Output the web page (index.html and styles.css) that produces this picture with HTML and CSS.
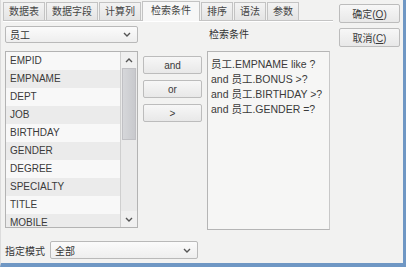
FILE: index.html
```html
<!DOCTYPE html>
<html lang="zh-CN">
<head>
    <meta charset="UTF-8">
    <title>检索条件</title>
    <link rel="stylesheet" href="styles.css">
</head>
<body>
    <div class="window">
        <div class="main">
            <!-- 页签 -->
            <div class="tabs">
                <div class="tab">数据表</div>
                <div class="tab">数据字段</div>
                <div class="tab">计算列</div>
                <div class="tab active">检索条件</div>
                <div class="tab">排序</div>
                <div class="tab">语法</div>
                <div class="tab">参数</div>
            </div>

            <div class="panel">
                <div class="combo">
                    <span>员工</span>
                    <svg class="chev" width="8" height="5" viewBox="0 0 8 5"><path d="M1 1l3 3 3-3" fill="none" stroke="#555" stroke-width="1.4"/></svg>
                </div>
                <div></div>
                <div class="label">检索条件</div>

                <!-- 字段列表 -->
                <div class="listbox">
                    <ul class="items">
                        <li>EMPID</li>
                        <li>EMPNAME</li>
                        <li>DEPT</li>
                        <li>JOB</li>
                        <li>BIRTHDAY</li>
                        <li>GENDER</li>
                        <li>DEGREE</li>
                        <li>SPECIALTY</li>
                        <li>TITLE</li>
                        <li>MOBILE</li>
                    </ul>
                    <div class="scrollbar">
                        <div class="arrow">
                            <svg width="8" height="5" viewBox="0 0 8 5"><path d="M1 4l3-3 3 3" fill="none" stroke="#555" stroke-width="1.4"/></svg>
                        </div>
                        <div class="track"><div class="thumb"></div></div>
                        <div class="arrow">
                            <svg width="8" height="5" viewBox="0 0 8 5"><path d="M1 1l3 3 3-3" fill="none" stroke="#555" stroke-width="1.4"/></svg>
                        </div>
                    </div>
                </div>

                <div class="ops">
                    <button class="btn">and</button>
                    <button class="btn">or</button>
                    <button class="btn">&gt;</button>
                </div>

                <div class="textbox">
                    <div>员工.EMPNAME like ?</div>
                    <div>and 员工.BONUS &gt;?</div>
                    <div>and 员工.BIRTHDAY &gt;?</div>
                    <div>and 员工.GENDER =?</div>
                </div>

                <div class="mode">
                    <span>指定模式</span>
                    <div class="combo wide">
                        <span>全部</span>
                        <svg class="chev" width="8" height="5" viewBox="0 0 8 5"><path d="M1 1l3 3 3-3" fill="none" stroke="#555" stroke-width="1.4"/></svg>
                    </div>
                </div>
            </div>
        </div>

        <div class="side">
            <button class="btn dlg">确定(<u>O</u>)</button>
            <button class="btn dlg">取消(<u>C</u>)</button>
        </div>
    </div>
</body>
</html>
```

FILE: styles.css
```css
body {
    margin: 0;
    background: #2b3440;
    font-family: "Liberation Sans", "Noto Sans CJK SC", sans-serif;
    font-size: 10px;
    color: #333;
}
.window {
    width: 402px;
    height: 263px;
    display: flex;
    background: #f2f2f1;
    border-left: 1px solid #dcdcdc;
    border-right: 3px solid #6f97c4;
    border-bottom: 4px solid #6f97c4;
}
.main {
    width: 331px;
    padding: 2px 0 0 1px;
}
.tabs {
    display: flex;
    gap: 1px;
    margin-left: 1px;
    height: 18px;
    border-bottom: 1px solid #c4c4c4;
    box-shadow: 0 1px 0 #fff;
}
.tab {
    padding: 0 5px;
    line-height: 17px;
    border: 1px solid #c3c3c3;
    border-bottom: none;
    background: linear-gradient(#f3f3f3, #e4e4e4);
    color: #444;
}
.tab.active {
    background: #f7f7f7;
    height: 19px;
    margin-top: -1px;
    padding: 0 8px;
}
.panel {
    display: grid;
    grid-template-columns: 133px 59px 123px;
    grid-template-rows: 17px 179px auto;
    column-gap: 5px;
    row-gap: 8px;
    padding: 5px 0 0 3px;
}
.combo {
    display: flex;
    align-items: center;
    justify-content: space-between;
    padding: 0 6px 0 4px;
    border: 1px solid #b9b9b9;
    border-radius: 2px;
    background: linear-gradient(#fbfbfb, #eeeeee);
    box-sizing: border-box;
    height: 17px;
}
.label {
    align-self: end;
    padding-left: 2px;
    line-height: 12px;
    margin-bottom: 2px;
}
.listbox {
    display: flex;
    height: 177px;
    border: 1px solid #b3b3b3;
    box-sizing: border-box;
    background: #f8f8f8;
    overflow: hidden;
}
.items {
    flex: 1;
    list-style: none;
    margin: 0;
    padding: 0;
}
.items li {
    height: 18px;
    line-height: 18px;
    padding-left: 4px;
    background: #f8f8f8;
    color: #3a3a3a;
}
.items li:nth-child(even) {
    background: #ebebeb;
}
.scrollbar {
    width: 16px;
    display: flex;
    flex-direction: column;
    border-left: 1px solid #cfcfcf;
    background: #eaeaea;
}
.arrow {
    height: 16px;
    display: flex;
    align-items: center;
    justify-content: center;
    background: #f0f0f0;
}
.track {
    flex: 1;
}
.thumb {
    height: 70px;
    margin: 0 1px;
    background: linear-gradient(90deg, #d6d7da, #c8c9cd);
    border: 1px solid #c0c0c4;
}
.ops {
    display: flex;
    flex-direction: column;
    gap: 6px;
    padding-top: 5px;
}
.btn {
    font: inherit;
    color: #3a3a3a;
    height: 18px;
    padding: 0;
    border: 1px solid #bcbcbc;
    border-radius: 2px;
    background: linear-gradient(#f7f7f7, #e8e8e8);
}
.textbox {
    height: 179px;
    box-sizing: border-box;
    border: 1px solid #b5b5b5;
    border-right-color: #c8c8c8;
    background: #f6f6f5;
    padding: 5px 3px;
    line-height: 15px;
    font-size: 10.5px;
    color: #3a3a3a;
}
.mode {
    grid-column: 1 / 3;
    display: flex;
    align-items: center;
    gap: 5px;
    margin-top: 3px;
}
.combo.wide {
    width: 148px;
    height: 18px;
}
.side {
    flex: 1;
    display: flex;
    flex-direction: column;
    gap: 5px;
    padding: 4px 0 0 6px;
}
.dlg {
    width: 61px;
    height: 19px;
}
```
